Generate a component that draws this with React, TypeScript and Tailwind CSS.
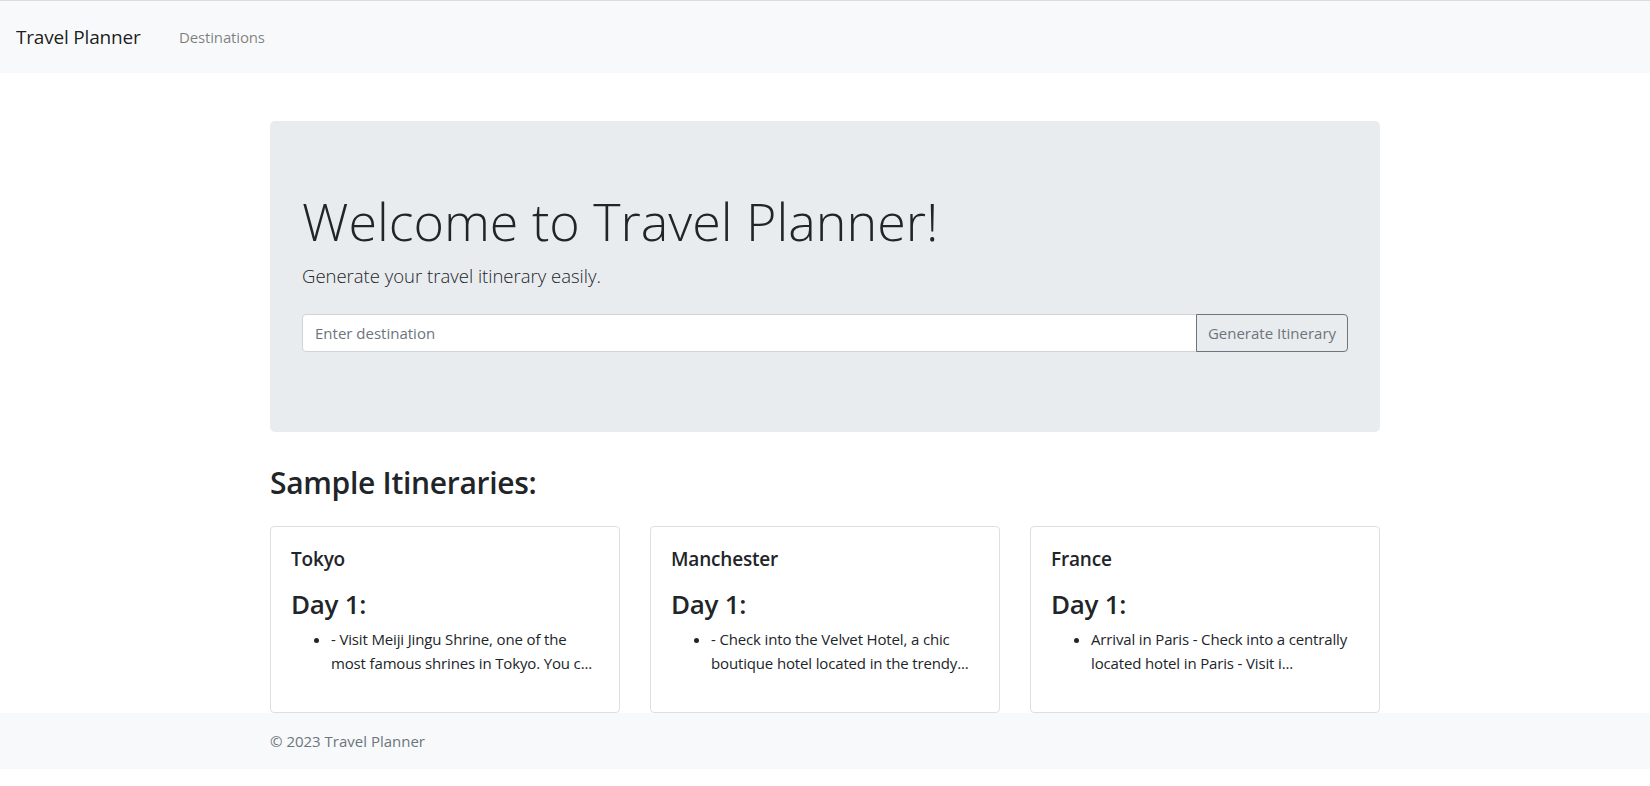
import React from 'react'

const samples = [
  {
    city: 'Tokyo',
    text: '- Visit Meiji Jingu Shrine, one of the most famous shrines in Tokyo. You c...',
  },
  {
    city: 'Manchester',
    text: '- Check into the Velvet Hotel, a chic boutique hotel located in the trendy...',
  },
  {
    city: 'France',
    text: 'Arrival in Paris - Check into a centrally located hotel in Paris - Visit i...',
  },
]

const ItineraryCard = ({ city, text }: { city: string; text: string }) => {
  return (
    <div className="rounded-[4px] border border-[#dfdfdf] bg-white px-5 pt-5 pb-[21px]">
      <h5 className="mb-4 text-[19px] leading-[24px] font-semibold tracking-[-0.01em]">{city}</h5>
      <h3 className="mb-[6px] text-[26px] leading-[34px] font-semibold tracking-[-0.01em]">Day 1:</h3>
      <ul className="mb-4 list-disc pl-10 text-[15px] leading-6 tracking-[-0.01em]">
        <li>{text}</li>
      </ul>
    </div>
  )
}

export default function App() {
  return (
    <div className="min-h-screen bg-white font-['Open_Sans','Noto_Sans',sans-serif] text-[#212529]">
      <nav className="flex h-[73px] items-center border-t border-[#dcdcdc] bg-[#f8f9fa] px-4">
        <a href="#" className="w-[163px] shrink-0 text-[19px] leading-[30px] tracking-[-0.01em] text-[rgba(0,0,0,0.9)]">
          Travel Planner
        </a>
        <a href="#" className="text-[15px] leading-6 tracking-[-0.01em] text-[rgba(0,0,0,0.5)]">
          Destinations
        </a>
      </nav>

      <main className="mx-auto w-[1110px]">
        <section className="mt-12 rounded-[5px] bg-[#e9ecef] px-8 pt-16 pb-16">
          <h1 className="mb-[5px] text-[52px] leading-[71px] font-light">Welcome to Travel Planner!</h1>
          <p className="mb-[23px] text-[18.5px] leading-[30px] font-light">Generate your travel itinerary easily.</p>
          <div className="mb-4 flex h-[38px]">
            <input
              type="text"
              placeholder="Enter destination"
              className="min-w-0 flex-1 rounded-l-[4px] border border-[#ced4da] bg-white px-3 text-[15px] text-[#495057] outline-none placeholder:text-[#6c757d]"
            />
            <button className="-ml-px w-[152px] rounded-r-[4px] border border-[#6c757d] text-[15px] text-[#6c757d]">
              Generate Itinerary
            </button>
          </div>
        </section>

        <h2 className="mt-8 mb-6 text-[30px] leading-[38px] font-semibold tracking-[-0.01em]">Sample Itineraries:</h2>

        <div className="grid grid-cols-3 gap-[30px]">
          {samples.map((s) => (
            <ItineraryCard key={s.city} city={s.city} text={s.text} />
          ))}
        </div>
      </main>

      <footer className="bg-[#f8f9fa] py-4">
        <div className="mx-auto w-[1110px] text-[15px] leading-6 text-[#6c757d]">© 2023 Travel Planner</div>
      </footer>
    </div>
  )
}
